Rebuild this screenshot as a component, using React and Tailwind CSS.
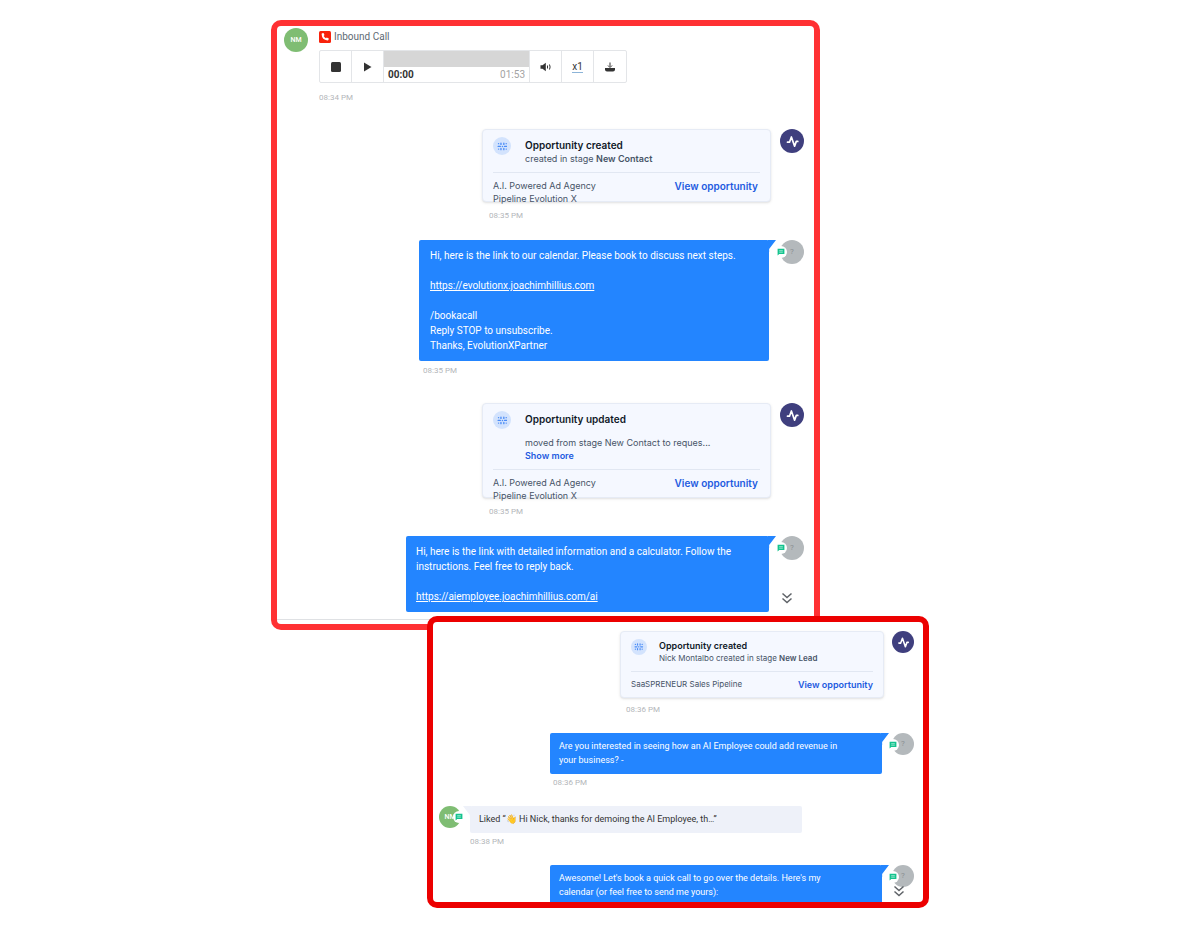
import React from "react";

function PulseAvatar({ size }) {
  return (
    <span className={`${size} flex shrink-0 items-center justify-center rounded-full bg-[#3f3f7e] text-white`}>
      <svg viewBox="0 0 24 24" className="w-full" fill="none" stroke="currentColor" strokeWidth="1.7" strokeLinecap="round" strokeLinejoin="round" aria-hidden="true">
        <path d="M7.500 13.200h2l1.900-5.200 3.200 9.200 1.700-4.800h1.500" />
      </svg>
    </span>
  );
}

function ChatBadge({ side }) {
  return (
    <span className={`${side} absolute flex h-3 w-3 items-center justify-center rounded-full bg-white`}>
      <svg viewBox="0 0 8 8" className="h-2 w-2" aria-hidden="true">
        <path d="M.6 .8h6.800v5.200H2.200L.6 7.400z" fill="#14c38e" />
        <path d="M2.200 2.700h3.600M2.200 4.200h3.600" stroke="#c9f5e6" strokeWidth=".7" />
      </svg>
    </span>
  );
}

function UnknownAvatar({ size }) {
  return (
    <span className={`${size} relative flex shrink-0 items-center justify-center rounded-full bg-[#b4b9bc] text-[8px] text-[#8a8f92]`}>
      ?
      <ChatBadge side="top-[6px] -left-[5px]" />
    </span>
  );
}

function ContactAvatar({ size, badge }) {
  return (
    <span className={`${size} relative flex shrink-0 items-center justify-center rounded-full bg-[#7fbd73] text-[7px] font-medium text-white`}>
      NM
      {badge && <ChatBadge side="top-[5px] -right-[4px]" />}
    </span>
  );
}

function StageIcon({ size }) {
  return (
    <span className={`${size} mt-[7px] flex shrink-0 items-center justify-center rounded-full bg-[#d3e3fd]`}>
      <svg viewBox="0 0 12 12" className="w-3/5" fill="none" stroke="#4a8cf7" strokeWidth="1.500" strokeLinecap="round" aria-hidden="true">
        <path d="M1.700 3h.1M1.300 6h2.400M1.700 9h.1M10.200 3h.1M8.300 6h2.400M10.200 9h.1M6 5.900v.2M4.400 2.400v1.400M7.600 2.400v1.400M4.400 8.200v1.400M7.600 8.200v1.400" />
      </svg>
    </span>
  );
}

function DoubleChevron({ place }) {
  return (
    <button type="button" aria-label="Scroll to latest" className={`${place} absolute h-3 w-3 text-[#5f6368]`}>
      <svg viewBox="0 0 12 12" fill="none" stroke="currentColor" strokeWidth="1.500" aria-hidden="true">
        <path d="M1.500 1.500 6 5.500l4.500-4M1.500 6.500 6 10.500l4.500-4" />
      </svg>
    </button>
  );
}

function Time({ className, children }) {
  return <time className={`${className} block text-[#b3b6ba]`}>{children}</time>;
}

function Bubble({ className, children }) {
  return (
    <div className={`${className} relative rounded-[2px] bg-[#2385ff] text-white`}>
      <svg viewBox="0 0 7 12" className="absolute top-0 left-full -ml-px h-3 w-2" preserveAspectRatio="none" aria-hidden="true">
        <path d="M0 0h7L1 9v3H0z" fill="#2385ff" />
      </svg>
      {children}
    </div>
  );
}

function PlayerButton({ label, children }) {
  return (
    <button type="button" aria-label={label} className="flex w-8 items-center justify-center border-r border-[#e3e5e8] text-[#333] last:border-r-0">
      {children}
    </button>
  );
}

function CallPlayer() {
  return (
    <div className="mt-[5px] flex h-[33px] w-[308px] rounded-[2px] border border-[#e3e5e8]">
      <PlayerButton label="Stop">
        <svg viewBox="0 0 10 10" className="h-[10px] w-[10px]"><rect width="10" height="10" rx="1.500" fill="currentColor" /></svg>
      </PlayerButton>
      <PlayerButton label="Play">
        <svg viewBox="0 0 9 10" className="h-[10px] w-[9px]"><path d="M1 .5 8.500 5 1 9.500z" fill="currentColor" /></svg>
      </PlayerButton>
      <div className="flex flex-1 flex-col border-r border-[#e3e5e8]">
        <div className="h-4 bg-[#d6d6d6]" />
        <div className="flex justify-between px-1 text-[10px] leading-[15px]">
          <span className="font-bold text-[#333]">00:00</span>
          <span className="text-[#a3a3a3]">01:53</span>
        </div>
      </div>
      <PlayerButton label="Volume">
        <svg viewBox="0 0 12 10" className="h-[10px] w-3" fill="none" stroke="currentColor">
          <path d="M.5 3.200h2L5.800.8v8.400L2.500 6.800h-2z" fill="currentColor" stroke="none" />
          <path d="M7.500 3.500v3M9.500 2.500q1.200 2.500 0 5" strokeWidth="1" />
        </svg>
      </PlayerButton>
      <PlayerButton label="Playback speed">
        <span className="border-b border-[#8cb4d8] pt-px text-[10px] leading-[10px]">x1</span>
      </PlayerButton>
      <PlayerButton label="Download">
        <svg viewBox="0 0 12 12" className="h-3 w-3">
          <path d="M1 7h10v1.500Q11 10.500 9 10.500H3Q1 10.500 1 8.500z" fill="currentColor" />
          <path d="M6 1.500v4M4 4.500l2 2 2-2" stroke="currentColor" fill="none" strokeWidth="1" />
        </svg>
      </PlayerButton>
    </div>
  );
}

const cardBase = "rounded-[4px] border border-[#e6ebf5] bg-[#f5f8ff] font-['Inter',sans-serif] text-[#475467] shadow-sm";

function LargeCard({ title, height, children }) {
  return (
    <article className={`${cardBase} ${height} mr-[9px] w-[289px] px-[10px]`}>
      <div className="flex gap-[14px]">
        <StageIcon size="h-[18px] w-[18px]" />
        <div className="pt-[8px] text-[9px] leading-[13px]">
          <h3 className="text-[10px] leading-[14px] font-semibold text-[#101828]">{title}</h3>
          {children}
        </div>
      </div>
      <footer className="mt-[7px] flex items-start justify-between border-t border-[#e1e7f2] pt-[6px] text-[9px] leading-[13px]">
        <p>A.I. Powered Ad Agency<br />Pipeline Evolution X</p>
        <a href="#opportunity" className="pr-[2px] text-[10px] leading-[14px] font-semibold text-[#1d5bdf]">View opportunity</a>
      </footer>
    </article>
  );
}

export default function App() {
  return (
    <main className="min-h-screen bg-white px-4 pt-5 font-['Roboto',sans-serif]">
      <div className="mx-auto flex max-w-[658px] flex-col">
        <section className="relative w-[549px] max-w-full rounded-[10px] border-[6px] border-[#ff3133] bg-white pb-1">
          <div className="flex gap-[11px] px-[7px] pt-[2px]">
            <ContactAvatar size="h-6 w-6" />
            <div className="pt-px">
              <h2 className="flex items-center gap-[3px] text-[10px] leading-4 text-[#606a74]">
                <svg viewBox="0 0 12 12" className="h-3 w-3" aria-hidden="true">
                  <rect width="12" height="12" rx="1.500" fill="#f8220c" />
                  <path d="M3.300 2.300 4.500 2l1 2-.8.9q.7 1.500 2.200 2.300l.9-.8 2 1-.3 1.300q-.2.700-1 .7Q3 9 2.600 3.300q0-.8.700-1z" fill="#fff" />
                </svg>
                Inbound Call
              </h2>
              <CallPlayer />
              <Time className="mt-[9px] text-[8px] leading-3">08:34 PM</Time>
            </div>
          </div>

          <div className="mt-[25px] flex justify-end pr-[10px]">
            <div>
              <LargeCard title="Opportunity created" height="h-[73px]">
                <p>created in stage <b className="font-semibold">New Contact</b></p>
              </LargeCard>
              <Time className="mt-[8px] ml-[7px] text-[8px] leading-3">08:35 PM</Time>
            </div>
            <PulseAvatar size="h-6 w-6" />
          </div>

          <div className="mt-[18px] flex justify-end pr-[10px]">
            <div>
              <Bubble className="mr-[11px] w-[350px] px-[11px] py-2 text-[10px] leading-[15px]">
                <p>Hi, here is the link to our calendar. Please book to discuss next steps.</p>
                <p className="mt-[15px]"><a href="#calendar" className="underline">https://evolutionx.joachimhillius.com</a></p>
                <p className="mt-[15px]">/bookacall<br />Reply STOP to unsubscribe.<br />Thanks, EvolutionXPartner</p>
              </Bubble>
              <Time className="mt-1 ml-1 text-[8px] leading-3">08:35 PM</Time>
            </div>
            <UnknownAvatar size="h-6 w-6" />
          </div>

          <div className="mt-[26px] flex justify-end pr-[10px]">
            <div>
              <LargeCard title="Opportunity updated" height="h-[95px]">
                <p className="mt-[10px]">moved from stage New Contact to reques...</p>
                <button type="button" className="block font-semibold text-[#1d5bdf]">Show more</button>
              </LargeCard>
              <Time className="mt-[8px] ml-[7px] text-[8px] leading-3">08:35 PM</Time>
            </div>
            <PulseAvatar size="h-6 w-6" />
          </div>

          <div className="relative mt-[18px] flex justify-end border-b border-[#dfe1e4] pr-[10px] pb-[7px]">
            <Bubble className="mr-[11px] w-[363px] px-[10px] py-2 text-[10px] leading-[15px]">
              <p>Hi, here is the link with detailed information and a calculator. Follow the instructions. Feel free to reply back.</p>
              <p className="mt-[15px]"><a href="#ai" className="underline">https://aiemployee.joachimhillius.com/ai</a></p>
            </Bubble>
            <UnknownAvatar size="h-6 w-6" />
            <DoubleChevron place="right-[21px] bottom-[15px]" />
          </div>
        </section>

        <section className="relative -mt-[14px] h-[292px] w-[502px] max-w-full self-end overflow-hidden rounded-[10px] border-[6px] border-[#ec0000] bg-white pt-[9px]">
          <div className="flex justify-end pr-[9px]">
            <div>
              <article className={`${cardBase} mr-2 h-[67px] w-[264px] px-[10px]`}>
                <div className="flex gap-[12px]">
                  <StageIcon size="h-4 w-4" />
                  <div className="pt-[8px] text-[8px] leading-3">
                    <h3 className="text-[9px] leading-3 font-semibold text-[#101828]">Opportunity created</h3>
                    <p>Nick Montalbo created in stage <b className="font-semibold">New Lead</b></p>
                  </div>
                </div>
                <footer className="mt-[7px] flex items-start justify-between border-t border-[#e1e7f2] pt-[6px] text-[8px] leading-3">
                  <p>SaaSPRENEUR Sales Pipeline</p>
                  <a href="#opportunity" className="text-[9px] leading-[13px] font-semibold text-[#1d5bdf]">View opportunity</a>
                </footer>
              </article>
              <Time className="mt-[7px] ml-[6px] text-[8px] leading-[10px]">08:36 PM</Time>
            </div>
            <PulseAvatar size="h-[22px] w-[22px]" />
          </div>

          <div className="mt-[18px] flex justify-end pr-[9px]">
            <div>
              <Bubble className="mr-[10px] w-[332px] px-[9px] pt-[6px] pb-[7px] text-[9px] leading-[14px]">
                <p>Are you interested in seeing how an AI Employee could add revenue in<br />your business? -</p>
              </Bubble>
              <Time className="mt-[4px] ml-[3px] text-[8px] leading-[10px]">08:36 PM</Time>
            </div>
            <UnknownAvatar size="h-[22px] w-[22px]" />
          </div>

          <div className="mt-[18px] flex gap-[9px] pl-[6px]">
            <ContactAvatar size="h-[22px] w-[22px]" badge />
            <div>
              <div className="relative w-[332px] rounded-[2px] bg-[#eef1f9] px-[9px] pt-[6px] pb-[7px] text-[9px] leading-[14px] text-[#333]">
                <svg viewBox="0 0 7 12" className="absolute top-0 right-full -mr-px h-3 w-2" preserveAspectRatio="none" aria-hidden="true">
                  <path d="M7 0H0l6 9v3h1z" fill="#eef1f9" />
                </svg>
                Liked “👋 Hi Nick, thanks for demoing the AI Employee, th…”
              </div>
              <Time className="mt-[4px] text-[8px] leading-[10px]">08:38 PM</Time>
            </div>
          </div>

          <div className="relative mt-[18px] flex justify-end pr-[9px]">
            <Bubble className="mr-[10px] w-[332px] px-[9px] pt-[6px] pb-[7px] text-[9px] leading-[14px]">
              <p>Awesome! Let's book a quick call to go over the details. Here's my<br />calendar (or feel free to send me yours):</p>
            </Bubble>
            <UnknownAvatar size="h-[22px] w-[22px]" />
            <DoubleChevron place="top-5 right-[18px]" />
          </div>
        </section>
      </div>
    </main>
  );
}
